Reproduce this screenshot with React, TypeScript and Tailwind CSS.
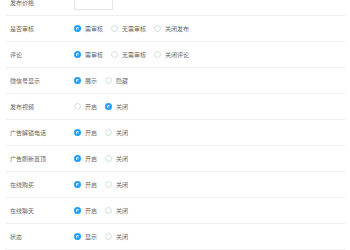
const ROWS: { label: string; options: string[]; checked: number }[] = [
  { label: "是否审核", options: ["需审核", "无需审核", "关闭发布"], checked: 0 },
  { label: "评论", options: ["需审核", "无需审核", "关闭评论"], checked: 0 },
  { label: "微信号显示", options: ["展示", "隐藏"], checked: 0 },
  { label: "发布视频", options: ["开启", "关闭"], checked: 1 },
  { label: "广告解锁电话", options: ["开启", "关闭"], checked: 0 },
  { label: "广告刷新置顶", options: ["开启", "关闭"], checked: 0 },
  { label: "在线购买", options: ["开启", "关闭"], checked: 0 },
  { label: "在线聊天", options: ["开启", "关闭"], checked: 0 },
  { label: "状态", options: ["显示", "关闭"], checked: 0 },
];

function Radio({ text, on }: { text: string; on: boolean }) {
  return (
    <label className="flex items-center gap-[4px] mr-[8px]">
      {on ? (
        <span className="w-[7px] h-[7px] rounded-full border-[2px] border-[#1e9fff] flex items-center justify-center">
          <span className="w-[2px] h-[2px] rounded-full bg-[#1e9fff]" />
        </span>
      ) : (
        <span className="w-[7px] h-[7px] rounded-full border border-[#cfe0dc]" />
      )}
      <span>{text}</span>
    </label>
  );
}

export default function App() {
  return (
    <div
      className="w-[350px] h-[250px] overflow-hidden bg-white text-[6px] text-[#666] leading-none"
      style={{ fontFamily: '"Noto Sans CJK SC", "Noto Sans", sans-serif' }}
    >
      <div className="mx-[5px] -mt-[10px]">
        <div className="h-[26px] flex items-center border-b border-[#f0f0f0] pl-[5px]">
          <div className="w-[64px]">发布价格</div>
          <div className="w-[39px] h-[18px] self-start mt-[2px] border border-[#e6e6e6] bg-white" />
        </div>
        {ROWS.map((r) => (
          <div key={r.label} className="h-[26px] flex items-center border-b border-[#f0f0f0] pl-[5px]">
            <div className="w-[64px]">{r.label}</div>
            <div className="flex items-center">
              {r.options.map((o, i) => (
                <Radio key={o} text={o} on={i === r.checked} />
              ))}
            </div>
          </div>
        ))}
      </div>
    </div>
  );
}
